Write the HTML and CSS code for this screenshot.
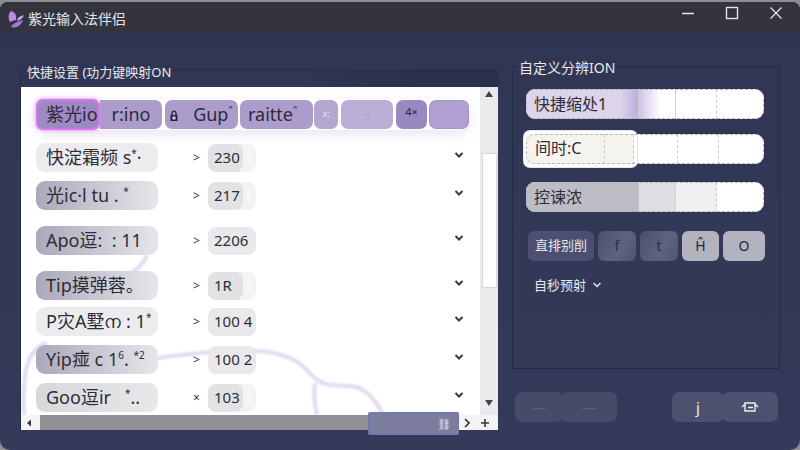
FILE: index.html
```html
<!DOCTYPE html>
<html lang="zh">
<head>
    <meta charset="UTF-8">
    <title>紫光输入法伴侣</title>
    <link rel="stylesheet" href="styles.css">
</head>
<body>
    <div class="window">
        <div class="titlebar">
            <svg class="logo" width="16" height="17" viewBox="0 0 16 17">
                <path d="M3 0 C7 1 9 4 8 9 C6 9 4 10 2 11 C0 7 0 3 3 0 Z" fill="#b98ae6"/>
                <path d="M16 4 C15 7 13 9 9 10 C9 7 12 5 16 4 Z" fill="#c9a0ee"/>
                <path d="M3 16 C4 13 8 11 15 9 C14 13 9 18 3 16 Z" fill="#a974de"/>
            </svg>
            <span class="app-name">紫光输入法伴侣</span>
            <div class="win-buttons">
                <svg width="14" height="14" viewBox="0 0 14 14"><path d="M1 7.5 H13" stroke="#e4e4e8" stroke-width="1.5"/></svg>
                <svg width="14" height="14" viewBox="0 0 14 14"><rect x="1.5" y="1.5" width="11" height="11" fill="none" stroke="#e4e4e8" stroke-width="1.4"/></svg>
                <svg width="14" height="14" viewBox="0 0 14 14"><path d="M1.5 1.5 L12.5 12.5 M12.5 1.5 L1.5 12.5" stroke="#e4e4e8" stroke-width="1.3"/></svg>
            </div>
        </div>

        <div class="main">
            <fieldset class="panel panel-left">
                <legend>快捷设置 (功力键映射ON</legend>
                <div class="list-box">
                    <div class="list-area">
                        <div class="list">
                            <svg class="curves" width="456" height="328" viewBox="0 0 456 328">
                                <path d="M3 328 C1 285 6 262 26 256 M70 270 C110 278 120 272 160 268 C215 262 262 258 285 282 C302 305 320 296 335 300 C348 304 356 315 362 328 M294 296 C292 310 294 320 296 328 M126 168 C122 178 116 182 108 188" fill="none" stroke="#cfc8ea" stroke-width="4"/>
                            </svg>
                            <div class="chips">
                                <span class="chip chip-active">紫光io</span>
                                <span class="chip chip-2">r:ino</span>
                                <span class="chip chip-3">
                                    <svg class="lock" width="8" height="11" viewBox="0 0 8 11"><path d="M2 5 V3 C2 0.5 6 0.5 6 3 V5" fill="none" stroke="#26243a" stroke-width="1.3"/><rect x="0.5" y="5" width="7" height="6" fill="#26243a"/><rect x="2.5" y="6.5" width="3" height="3" fill="#d8d0e6"/></svg>
                                    Gup<sup>"</sup>
                                </span>
                                <span class="chip chip-4">raitte<sup>"</sup></span>
                                <span class="chip chip-5">x:</span>
                                <span class="chip chip-6">··</span>
                                <span class="chip chip-7">4×</span>
                                <span class="chip chip-8"></span>
                            </div>
                            <div class="row">
                                <span class="pill pill-light">快淀霜频 s<sup>*</sup>·</span>
                                <span class="arrow">&gt;</span>
                                <span class="value has-tail"><b>230</b><i>›</i></span>
                                <svg class="chev" width="10" height="8" viewBox="0 0 10 8"><path d="M1.5 2 L5 5.5 L8.5 2" fill="none" stroke="#3a3a46" stroke-width="2"/></svg>
                            </div>
                            <div class="row">
                                <span class="pill pill-dark">光ic·l tu . <sup>*</sup></span>
                                <span class="arrow">&gt;</span>
                                <span class="value has-tail"><b>217</b><i>›</i></span>
                                <svg class="chev" width="10" height="8" viewBox="0 0 10 8"><path d="M1.5 2 L5 5.5 L8.5 2" fill="none" stroke="#3a3a46" stroke-width="2"/></svg>
                            </div>
                            <div class="row row-far">
                                <span class="pill pill-dark">Apo逗: &nbsp;: 11</span>
                                <span class="arrow">&gt;</span>
                                <span class="value"><b>2206</b></span>
                                <svg class="chev" width="10" height="8" viewBox="0 0 10 8"><path d="M1.5 2 L5 5.5 L8.5 2" fill="none" stroke="#3a3a46" stroke-width="2"/></svg>
                            </div>
                            <div class="row row-far">
                                <span class="pill pill-dark">Tip摸弹蓉。</span>
                                <span class="arrow">&gt;</span>
                                <span class="value has-tail"><b>1R</b><i>›</i></span>
                                <svg class="chev" width="10" height="8" viewBox="0 0 10 8"><path d="M1.5 2 L5 5.5 L8.5 2" fill="none" stroke="#3a3a46" stroke-width="2"/></svg>
                            </div>
                            <div class="row row-near">
                                <span class="pill pill-light">P灾A墅ന : 1<sup>*</sup></span>
                                <span class="arrow">&gt;</span>
                                <span class="value"><b>100 4</b></span>
                                <svg class="chev" width="10" height="8" viewBox="0 0 10 8"><path d="M1.5 2 L5 5.5 L8.5 2" fill="none" stroke="#3a3a46" stroke-width="2"/></svg>
                            </div>
                            <div class="row">
                                <span class="pill pill-dark">Yip痖 c 1<sup>6</sup>. <sup>*2</sup></span>
                                <span class="arrow">&gt;</span>
                                <span class="value"><b>100 2</b></span>
                                <svg class="chev" width="10" height="8" viewBox="0 0 10 8"><path d="M1.5 2 L5 5.5 L8.5 2" fill="none" stroke="#3a3a46" stroke-width="2"/></svg>
                            </div>
                            <div class="row">
                                <span class="pill pill-mid">Goo逗ir &nbsp; <sup>*</sup>..</span>
                                <span class="arrow">×</span>
                                <span class="value has-tail"><b>103</b><i>›</i></span>
                                <svg class="chev" width="10" height="8" viewBox="0 0 10 8"><path d="M1.5 2 L5 5.5 L8.5 2" fill="none" stroke="#3a3a46" stroke-width="2"/></svg>
                            </div>
                        </div>
                        <div class="vscroll">
                            <svg width="10" height="8" viewBox="0 0 10 8"><path d="M5 1 L9 7 H1 Z" fill="#44444e"/></svg>
                            <div class="vtrack-top"></div>
                            <div class="vthumb"></div>
                            <div class="vtrack-rest"></div>
                            <svg width="10" height="8" viewBox="0 0 10 8"><path d="M1 1 H9 L5 7 Z" fill="#44444e"/></svg>
                        </div>
                    </div>
                    <div class="hscroll">
                        <svg width="6" height="8" viewBox="0 0 6 8"><path d="M5 0.5 V7.5 L1 4 Z" fill="#33333c"/></svg>
                        <div class="htrack"><div class="hthumb">⛓</div></div>
                        <svg width="6" height="10" viewBox="0 0 6 10"><path d="M1 1 L5 5 L1 9" fill="none" stroke="#33333c" stroke-width="1.6"/></svg>
                        <svg width="8" height="8" viewBox="0 0 8 8"><path d="M4 0 V8 M0 4 H8" stroke="#33333c" stroke-width="1.6"/></svg>
                    </div>
                </div>
            </fieldset>

            <div class="side">
                <fieldset class="panel panel-right">
                    <legend>自定义分辨ION</legend>
                    <div class="slider">
                        <span class="seg seg-a seg-purple">快捷缩处1</span>
                        <span class="seg seg-b seg-fade"></span>
                        <span class="seg seg-c"></span>
                        <span class="seg seg-d"></span>
                    </div>
                    <div class="slider slider-open">
                        <div class="slider-pop">
                            <span class="pop-text">间时:C</span>
                            <span class="pop-end"></span>
                        </div>
                        <span class="seg seg-c"></span>
                        <span class="seg seg-c"></span>
                        <span class="seg seg-e"></span>
                    </div>
                    <div class="slider slider-last">
                        <span class="seg seg-a seg-gray">控谏浓</span>
                        <span class="seg seg-b seg-lgray"></span>
                        <span class="seg seg-c seg-xgray"></span>
                        <span class="seg seg-d"></span>
                    </div>
                    <div class="btn-row">
                        <span class="btn btn-wide">直排别削</span>
                        <span class="btn btn-dim">f</span>
                        <span class="btn btn-dim">t</span>
                        <span class="btn btn-pale">Ĥ</span>
                        <span class="btn btn-pale btn-o">O</span>
                    </div>
                    <div class="auto-row">
                        <span>自秒预射</span>
                        <svg width="10" height="8" viewBox="0 0 10 8"><path d="M1.5 2 L5 5.5 L8.5 2" fill="none" stroke="#e8e8f0" stroke-width="1.4"/></svg>
                    </div>
                </fieldset>
                <div class="footer-btns">
                    <div class="btn-group">
                        <span class="foot-btn foot-off">—</span>
                        <span class="foot-btn foot-off foot-join">—</span>
                    </div>
                    <div class="btn-group">
                        <span class="foot-btn">j</span>
                        <span class="foot-btn foot-join">
                            <svg width="18" height="14" viewBox="0 0 18 14"><path d="M4 3 H14 V11 H4 Z M1 7 L4 4 M17 7 L14 4 M7 7.5 H12" fill="none" stroke="#eeeef4" stroke-width="1.4"/></svg>
                        </span>
                    </div>
                </div>
            </div>
        </div>
    </div>
</body>
</html>
```

FILE: styles.css
```css
body {
    margin: 0;
    background: #8d8d92;
    font-family: 'Noto Sans', 'Noto Sans CJK SC', sans-serif;
}
.window {
    width: 800px;
    height: 448px;
    margin-top: 2px;
    border-radius: 8px 8px 10px 10px;
    overflow: hidden;
    background: linear-gradient(#2f3552, #363a5a);
}
.titlebar {
    height: 30px;
    background: #33343d;
    display: flex;
    align-items: center;
    padding-left: 8px;
    color: #e6e6ea;
}
.logo {
    margin: 4px 4px 0 0;
}
.app-name {
    font-size: 14px;
    line-height: 20px;
    margin-top: 4px;
}
.win-buttons {
    margin-left: auto;
    margin-right: 17px;
    margin-bottom: 8px;
    display: flex;
    gap: 30px;
}

.main {
    display: flex;
    align-items: flex-start;
    padding-left: 20px;
    gap: 14px;
}
fieldset.panel {
    margin: 0;
    padding: 0;
    min-width: 0;
    border: 1px solid #262b45;
}
.panel legend {
    color: #e9e9ee;
    font-size: 13px;
    line-height: 16px;
    padding: 4px 1px 0;
    margin-left: 5px;
}

/* left panel */
.panel-left {
    width: 477px;
    margin-top: 28px !important;
    padding-top: 7px !important;
    border-right: none !important;
    border-bottom: none !important;
    background: linear-gradient(90deg, transparent 60%, #2a2f4b 85%) top / 100% 17px no-repeat;
}
.list-box {
    background: #fff;
}
.list-area {
    display: flex;
    height: 328px;
}
.list {
    position: relative;
    isolation: isolate;
    flex: 1;
    padding: 12px 0 0 15px;
    background: #fff;
    overflow: hidden;
}
.curves {
    position: absolute;
    top: 0;
    left: 0;
    z-index: -1;
    opacity: 0.65;
    filter: blur(1px);
}
.chips {
    display: flex;
    align-items: center;
    height: 31px;
    margin-bottom: 13px;
    box-shadow: 0 4px 14px rgba(167, 148, 200, 0.25);
    border-radius: 10px;
    width: 433px;
}
.chip {
    flex: none;
    height: 29px;
    border-radius: 7px;
    background: #ab9ccb;
    color: #2d2a3d;
    font-size: 18px;
    line-height: 28px;
    text-align: center;
    white-space: nowrap;
    overflow: hidden;
}
.chip sup {
    font-size: 10px;
    line-height: 0;
}
.chip-active {
    position: relative;
    width: 64px;
    height: 31px;
    box-sizing: border-box;
    border: 2px solid #d878e8;
    box-shadow: 0 0 4px #dd8aee;
    background: #9d8ac4;
    line-height: 26px;
    text-align: left;
    padding-left: 8px;
}
.chip-2 {
    width: 62px;
    border-radius: 0 7px 7px 0;
    margin-right: 3px;
}
.chip-3 {
    width: 73px;
    margin-right: 2px;
}
.lock {
    margin-right: 10px;
}
.chip-4 {
    box-sizing: border-box;
    width: 73px;
    margin-right: 1px;
    padding-right: 8px;
}
.chip-5 {
    width: 24px;
    margin-right: 3px;
    font-size: 9px;
    color: #e8e4f2;
    background: #b3a6cf;
}
.chip-6 {
    width: 52px;
    margin-right: 3px;
    font-size: 10px;
    background: #baafd5;
    color: #8f86aa;
}
.chip-7 {
    width: 31px;
    margin-right: 2px;
    font-size: 11px;
    background: #9a88c0;
    border-radius: 7px;
    line-height: 24px;
}
.chip-8 {
    width: 40px;
    border: 1px dashed #9c8dbd;
    box-sizing: border-box;
    background: #b09fd0;
}

.row {
    display: flex;
    align-items: center;
    height: 29px;
    margin-bottom: 9px;
}
.row-far {
    margin-top: 16px;
}
.row-near {
    margin-top: -2px;
}
.pill {
    flex: none;
    box-sizing: border-box;
    width: 122px;
    height: 29px;
    padding-left: 10px;
    border-radius: 9px;
    color: #2d2d38;
    font-size: 18px;
    line-height: 28px;
    white-space: nowrap;
    overflow: hidden;
}
.pill sup {
    font-size: 10px;
    line-height: 0;
}
.pill-light {
    background: #ececee;
}
.pill-dark {
    background: linear-gradient(90deg, #aaa8ba, #e6e6ea);
}
.pill-mid {
    background: linear-gradient(90deg, #d8d8dc, #e8e8ea);
}
.arrow {
    width: 50px;
    padding-left: 35px;
    box-sizing: border-box;
    font-size: 12px;
    color: #33333d;
}
.value {
    display: flex;
    box-sizing: border-box;
    width: 48px;
    height: 28px;
    border-radius: 8px;
    background: #e9e9eb;
    color: #2d2d38;
    font-size: 15px;
    line-height: 27px;
    white-space: nowrap;
}
.value b {
    font-weight: 400;
    padding-left: 6px;
}
.has-tail {
    background: #f3f3f5;
}
.has-tail b {
    width: 35px;
    box-sizing: border-box;
    border-radius: 8px;
    background: #e2e2e4;
}
.has-tail i {
    font-style: normal;
    color: #fff;
    padding-left: 3px;
}
.chev {
    margin: 0 16px 6px auto;
}
.vscroll {
    flex: none;
    width: 18px;
    background: #eaeaec;
    display: flex;
    flex-direction: column;
    align-items: center;
}
.vscroll svg {
    flex: none;
    margin: 3px 0 8px;
}
.vtrack-top {
    height: 47px;
}
.vthumb {
    box-sizing: border-box;
    width: 15px;
    height: 135px;
    background: #fff;
    border: 1px solid #d6d6da;
    border-radius: 2px;
}
.vtrack-rest {
    flex: 1;
}
.hscroll {
    display: flex;
    align-items: center;
    height: 15px;
    background: #f4f4f6;
    padding-left: 5px;
    position: relative;
}
.htrack {
    position: relative;
    width: 419px;
    height: 15px;
    margin-left: 8px;
    margin-right: 5px;
    background: #8f8f94;
}
.hthumb {
    position: absolute;
    top: -3px;
    right: 0;
    box-sizing: border-box;
    width: 91px;
    height: 23px;
    padding-right: 6px;
    background: #7c7d9f;
    border: 2px solid #7478b0;
    border-radius: 2px;
    color: #f2f2f6;
    font-size: 11px;
    line-height: 19px;
    text-align: right;
}
.hscroll svg:last-child {
    margin-left: 11px;
}

/* right panel */
.side {
    flex: none;
    width: 268px;
    margin-top: 24px;
}
.panel-right {
    height: 313px;
    box-sizing: border-box;
    padding: 13px 0 0 13px !important;
}
.panel-right legend {
    font-size: 14px;
    margin-left: -8px;
}
.slider {
    display: flex;
    position: relative;
    width: 238px;
    height: 30px;
    margin-bottom: 15px;
    border-radius: 9px;
    overflow: hidden;
    background: #fff;
    outline: 1px dashed #b4b4c0;
    outline-offset: -1px;
}
.slider-last {
    margin-top: 18px;
    margin-bottom: 19px;
}
.slider-open {
    overflow: visible;
}
.seg {
    flex: none;
    box-sizing: border-box;
    height: 100%;
    border-right: 1px dashed #c9c9cf;
    color: #2d2d38;
    font-size: 16px;
    line-height: 30px;
    padding-left: 8px;
    white-space: nowrap;
    overflow: hidden;
}
.seg:last-child {
    border-right: none;
}
.seg-a {
    width: 113px;
}
.seg-b {
    width: 37px;
}
.seg-c {
    width: 41px;
}
.seg-d {
    width: 47px;
}
.seg-e {
    width: 45px;
}
.seg-purple {
    background: linear-gradient(90deg, #ddd3ea 85%, #bcaedb);
    border-radius: 9px 0 0 9px;
}
.seg-fade {
    background: linear-gradient(90deg, #cfc3e6, #ffffff 60%);
    border-right-color: #d8d8dc;
}
.seg-gray {
    background: #bcbcc4;
}
.seg-lgray {
    background: #dedee2;
}
.seg-xgray {
    background: #f0f0f2;
}
.slider-pop {
    flex: none;
    box-sizing: border-box;
    display: flex;
    width: 113px;
    height: 36px;
    margin: -3px 0 -3px -2px;
    border: 3px solid #fff;
    border-radius: 6px;
    background: #f4f3ee;
    box-shadow: 0 0 0 1px #e8e8ec;
}
.pop-text {
    box-sizing: border-box;
    width: 78px;
    padding-left: 8px;
    color: #2d2d38;
    font-size: 16px;
    line-height: 28px;
    border-right: 1px dashed #c9c9cf;
}
.pop-end {
    flex: 1;
    border-right: 1px dashed #c9c9cf;
}
.btn-row {
    display: flex;
    gap: 4px;
    align-items: center;
    margin-left: 2px;
}
.btn {
    flex: none;
    width: 38px;
    height: 30px;
    border-radius: 6px;
    background: #51556f;
    color: #1f2238;
    font-size: 14px;
    line-height: 29px;
    text-align: center;
}
.btn-wide {
    width: 66px;
    background: #4c5070;
    color: #e6e6ee;
    font-size: 13px;
}
.btn-dim {
    color: #2a2e48;
    background: linear-gradient(120deg, #4c5070, #5f6280 60%, #4f5370);
}
.btn-pale {
    width: 37px;
    background: #b3b3c0;
    color: #25263a;
}
.btn-o {
    width: 42px;
}
.auto-row {
    display: flex;
    align-items: center;
    gap: 6px;
    margin: 14px 0 0 8px;
    color: #e9e9f0;
    font-size: 13px;
    line-height: 20px;
}
.footer-btns {
    display: flex;
    justify-content: space-between;
    margin: 23px 2px 0 3px;
}
.btn-group {
    display: flex;
}
.foot-btn {
    box-sizing: border-box;
    display: flex;
    align-items: center;
    justify-content: center;
    width: 52px;
    height: 30px;
    border-radius: 7px;
    background: #4d5170;
    color: #f0f0f6;
    font-size: 15px;
}
.foot-join {
    width: 56px;
    margin-left: -2px;
}
.foot-off {
    width: 48px;
    background: #474b68;
    color: #5a5e7a;
}
.foot-off.foot-join {
    width: 56px;
}
```
